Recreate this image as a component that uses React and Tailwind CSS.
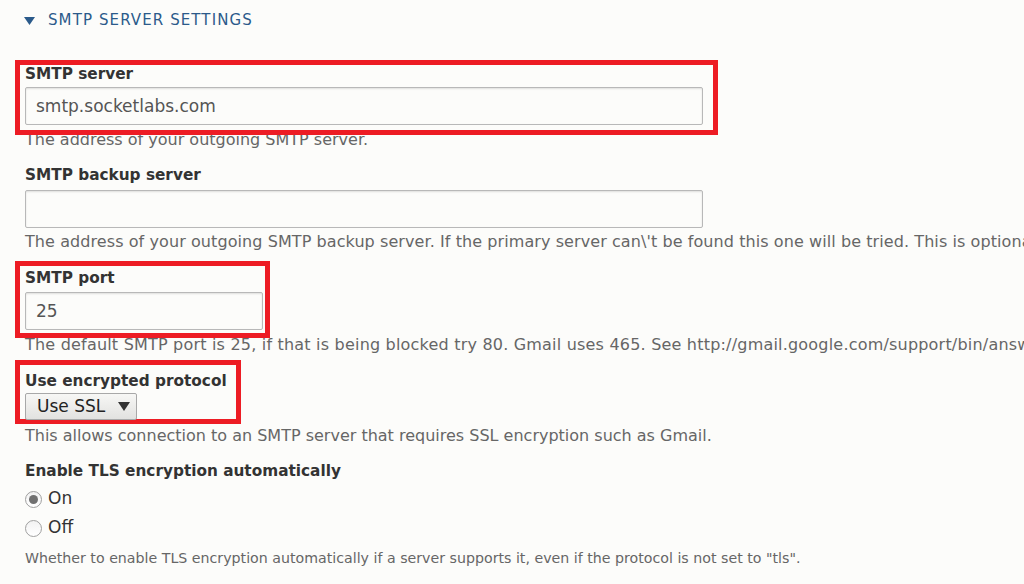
import React, { useState } from 'react';

// Drupal-style SMTP settings form with red highlight boxes
const font = { fontFamily: '"DejaVu Sans", Verdana, sans-serif' };
const inputCls = 'block h-[38px] border border-[#b8b8b8] rounded-[2px] bg-[#fcfcfa] px-[10px] text-[17px] text-[#555] shadow-[inset_0_1px_2px_rgba(0,0,0,0.12)] outline-none';

function Label({ children, className = '' }) {
  return <label className={`block whitespace-nowrap text-[15.3px] font-bold text-[#333] ${className}`}>{children}</label>;
}

function Desc({ children, className = '' }) {
  return <div className={`whitespace-nowrap text-[16px] text-[#666] leading-[20px] ${className}`}>{children}</div>;
}

export default function App() {
  const [tls, setTls] = useState('on');
  return (
    <div className="w-[1024px] h-[584px] overflow-hidden bg-[#fcfcfa] text-[#333]" style={font}>
      <div className="flex items-center gap-[13px] pl-[24px] pt-[11px] h-[30px] text-[#2b5a8a] text-[15px] tracking-[1.1px]">
        <svg width="11" height="8" viewBox="0 0 11 8"><path d="M0 0H11L5.5 8Z" fill="#2b5a8a" /></svg>
        <span>SMTP SERVER SETTINGS</span>
      </div>

      <div className="pl-[15px]">
        <div className="relative z-10 mt-[30px] w-[703px] h-[75px] border-[5px] border-[#ed1c24] pl-[5px] pt-[1px]">
          <Label className="leading-[16px]">SMTP server</Label>
          <input readOnly value="smtp.socketlabs.com" className={`${inputCls} mt-[5px] w-[678px]`} />
        </div>
        <Desc className="-mt-[5px] pl-[10px]">The address of your outgoing SMTP server.</Desc>

        <div className="pl-[10px] pt-[15px]">
          <Label className="leading-[20px]">SMTP backup server</Label>
          <input readOnly value="" className={`${inputCls} mt-[5px] w-[678px]`} />
          <Desc className="mt-[4px] tracking-[0.08px]">The address of your outgoing SMTP backup server. If the primary server can\'t be found this one will be tried. This is optional.</Desc>
        </div>

        <div className="relative z-10 mt-[9px] w-[255px] h-[77px] border-[5px] border-[#ed1c24] pl-[5px] pt-[4px]">
          <Label className="leading-[16px]">SMTP port</Label>
          <input readOnly value="25" className={`${inputCls} mt-[6px] w-[238px]`} />
        </div>
        <Desc className="-mt-[3px] pl-[10px] tracking-[0.2px]">The default SMTP port is 25, if that is being blocked try 80. Gmail uses 465. See http://gmail.google.com/support/bin/answer.py?answer=13287</Desc>

        <div className="relative z-10 mt-[5px] w-[226px] h-[64px] border-[5px] border-[#ed1c24] pl-[5px] pt-[8px]">
          <Label className="leading-[16px]">Use encrypted protocol</Label>
          <div className="mt-[4px] flex items-center justify-between w-[112px] h-[27px] border border-[#a8a8a8] rounded-[2px] bg-gradient-to-b from-[#f7f7f5] to-[#e2e2e0] pl-[11px] pr-[6px] text-[17px] text-[#222]">
            <span>Use SSL</span>
            <svg width="12" height="9" viewBox="0 0 12 9"><path d="M0 0H12L6 9Z" fill="#333" /></svg>
          </div>
        </div>
        <Desc className="mt-[2px] pl-[10px]">This allows connection to an SMTP server that requires SSL encryption such as Gmail.</Desc>

        <div className="pl-[10px] pt-[15px]">
          <Label className="leading-[20px]">Enable TLS encryption automatically</Label>
          <div className="mt-[8px] flex flex-col gap-[9px]">
            {['on', 'off'].map(v => (
              <label key={v} className="flex items-center gap-[6px] h-[20px] text-[17px] text-[#333]" onClick={() => setTls(v)}>
                <span className="w-[17px] h-[17px] rounded-full border border-[#a0a0a0] bg-gradient-to-b from-[#f2f2f2] to-[#ffffff] flex items-center justify-center">
                  {tls === v && <span className="w-[9px] h-[9px] rounded-full bg-[#707070]" />}
                </span>
                {v === 'on' ? 'On' : 'Off'}
              </label>
            ))}
          </div>
          <div className="whitespace-nowrap text-[14.2px] text-[#666] leading-[20px] mt-[10px]">Whether to enable TLS encryption automatically if a server supports it, even if the protocol is not set to "tls".</div>
        </div>
      </div>
    </div>
  );
}
